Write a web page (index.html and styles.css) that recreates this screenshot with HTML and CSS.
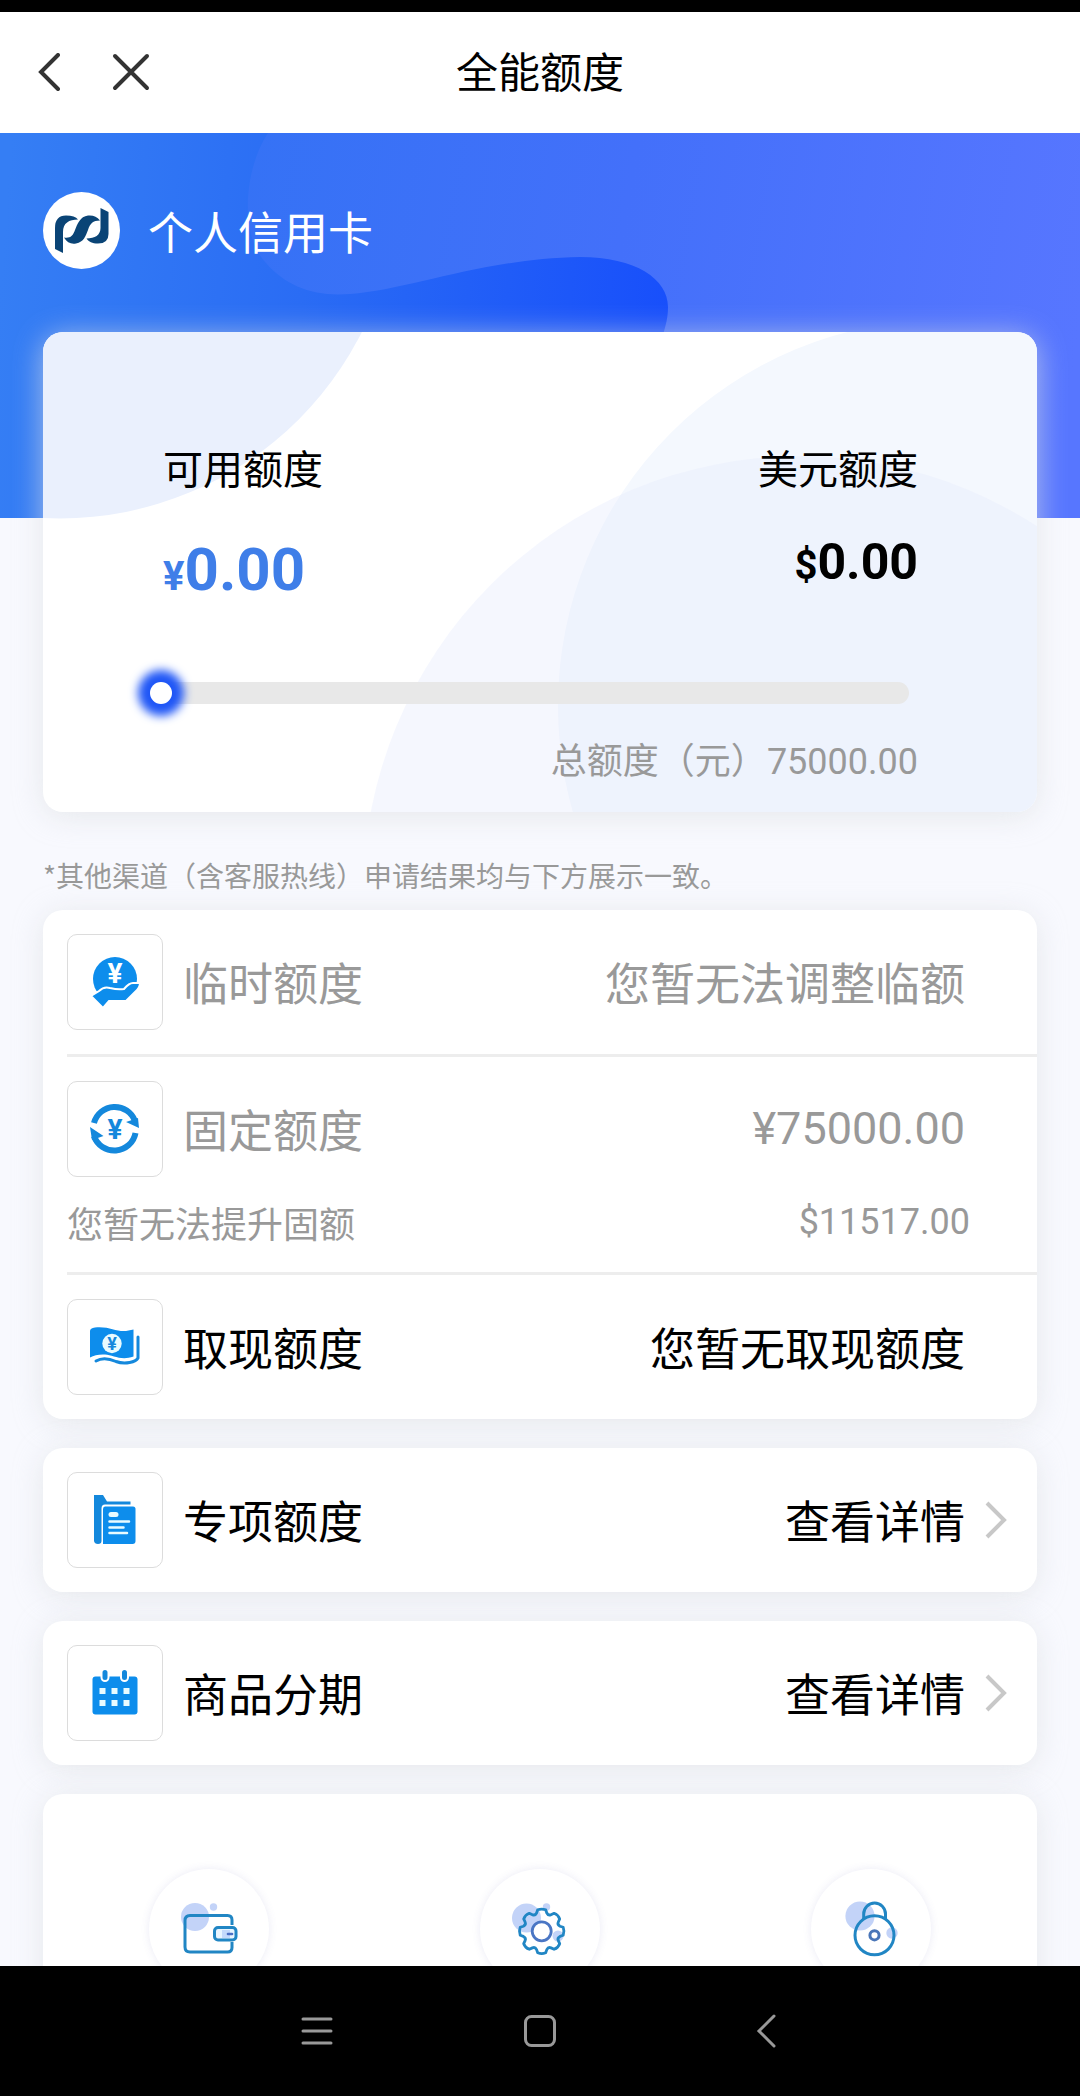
FILE: index.html
```html
<!DOCTYPE html>
<html lang="zh-CN">
<head>
<meta charset="utf-8">
<meta name="viewport" content="width=device-width, initial-scale=1">
<title>全能额度</title>
<link rel="stylesheet" href="styles.css">
</head>
<body>
<div class="status-bar"></div>

<header class="header">
  <div class="header-actions">
    <button class="icon-button" type="button" aria-label="返回">
      <svg width="22" height="40" viewBox="0 0 22 40"><path class="header-line" d="M20 2 3 19l17 17"/></svg>
    </button>
    <button class="icon-button" type="button" aria-label="关闭">
      <svg width="38" height="40" viewBox="0 0 38 40"><path class="header-line" d="m3 3 32 32M35 3 3 35"/></svg>
    </button>
  </div>
  <h1 class="title">全能额度</h1>
</header>

<main class="content">
  <section class="hero">
    <svg class="backdrop" viewBox="0 0 1080 385" preserveAspectRatio="none" aria-hidden="true">
      <defs>
        <linearGradient id="sky" gradientUnits="userSpaceOnUse" x1="0" y1="150" x2="670" y2="200">
          <stop offset="0" stop-color="#357ef4"/><stop offset=".45" stop-color="#2a6cf4"/><stop offset="1" stop-color="#184ffb"/>
        </linearGradient>
        <linearGradient id="wave" gradientUnits="userSpaceOnUse" x1="240" y1="60" x2="1080" y2="200">
          <stop offset="0" stop-color="#3572f5"/><stop offset=".45" stop-color="#4370fa"/><stop offset="1" stop-color="#5776ff"/>
        </linearGradient>
      </defs>
      <path fill="url(#sky)" d="M0 0h1080v385H0z"/>
      <path fill="url(#wave)" d="M268 0C243 38 240 104 266 130C286 153 314 164 350 161C410 157 480 126 580 124C636 124 668 146 668 174C668 184 666 192 662 205V385H1080V0Z"/>
    </svg>
    <div class="brand">
      <svg class="brand-logo" viewBox="0 0 77 77" aria-hidden="true">
        <circle cx="38.500" cy="38.500" r="38.500" fill="#fff"/>
        <g fill="#0a4476">
          <path d="M12 57V36Q12 23.500 23 23.500C29 23.500 33 25 35 27.500C26 27.500 20 31 20 40V61Z"/>
          <path d="M57 28.500C54 24.500 50 23 45 23.500C37 24.500 34.500 32 32 38C30 44 27 46.500 21 45.500C24 50.500 28 52.500 33 51.500C41 50 42.500 44 45 38C47 31.500 50 28.500 57 28.500Z"/>
          <path d="M57.500 16 65.500 20V42Q65.500 51.500 55 51.500C49 51.500 46 50 43.500 46.500C52 46.500 57.500 43 57.500 36Z"/>
        </g>
      </svg>
      <span class="brand-name">个人信用卡</span>
    </div>
  </section>

  <section class="card summary">
    <svg class="backdrop" viewBox="0 0 994 479" preserveAspectRatio="none" aria-hidden="true">
      <circle cx="17" cy="-152" r="338" fill="#eaf0fd"/>
      <circle cx="900" cy="373" r="385" fill="#f4f8fe"/>
      <circle cx="757" cy="561" r="437" fill="#e6ecfc" fill-opacity=".4"/>
    </svg>
    <div class="figures">
      <div class="figure">
        <h2 class="figure-label">可用额度</h2>
        <p class="amount amount-main"><span class="currency">¥</span>0.00</p>
      </div>
      <div class="figure figure-end">
        <h2 class="figure-label">美元额度</h2>
        <p class="amount amount-usd"><span class="currency">$</span>0.00</p>
      </div>
    </div>
    <input class="slider" type="range" min="0" max="75000" value="0" aria-label="可用额度">
    <p class="total">总额度（元）<span class="number">75000.00</span></p>
  </section>

  <p class="note">*其他渠道（含客服热线）申请结果均与下方展示一致。</p>

  <div class="cards">
    <ul class="card list">
      <li class="item muted">
        <div class="row">
          <span class="tile">
            <svg width="56" height="56" viewBox="0 0 56 56" aria-hidden="true">
              <circle cx="28" cy="25" r="22" fill="#0d8dec"/>
              <path d="M4 42 12 37Q17 32 23 34Q31 36 37 35Q42 29 46 29H53Q53 34 48 38L39 47H22L16 54Z" fill="#0d8dec" stroke="#fff" stroke-width="2"/>
              <text class="yen yen-light" x="28" y="29">¥</text>
            </svg>
          </span>
          <span class="label">临时额度</span>
          <span class="value">您暂无法调整临额</span>
        </div>
      </li>
      <li class="item muted">
        <div class="row">
          <span class="tile">
            <svg width="56" height="56" viewBox="0 0 56 56" aria-hidden="true">
              <g fill="none" stroke="#1488dc" stroke-width="6"><path d="M7 22A21.500 21.500 0 0 1 48 20"/><path d="M48.500 32A21.500 21.500 0 0 1 7 35"/></g>
              <path fill="#1488dc" d="M39 21 52 27 51 17ZM16.500 35 3 26 5 39Z"/>
              <text class="yen" x="28" y="38">¥</text>
            </svg>
          </span>
          <span class="label">固定额度</span>
          <span class="value number">¥75000.00</span>
        </div>
        <div class="subrow">
          <span>您暂无法提升固额</span>
          <span class="number">$11517.00</span>
        </div>
      </li>
      <li class="item">
        <div class="row">
          <span class="tile">
            <svg width="56" height="56" viewBox="0 0 56 56" aria-hidden="true">
              <path fill="#0d8dec" d="M3 12Q3 9 8 8.500C22 7 29 13 39 12L46.500 10.500V37.500C34 42 26 36 18 35.500Q9 35 3 38.500Z"/>
              <path fill="none" stroke="#1488dc" stroke-width="3" stroke-linecap="round" d="M51 18V39C49 43 38 46 29 42.500C20 38.500 14 39 9 42"/>
              <circle cx="25" cy="24.500" r="9.700" fill="#e9fbff"/>
              <text class="yen yen-small" x="25" y="31">¥</text>
            </svg>
          </span>
          <span class="label">取现额度</span>
          <span class="value">您暂无取现额度</span>
        </div>
      </li>
    </ul>

    <a class="card row" href="#special">
      <span class="tile">
        <svg width="56" height="56" viewBox="0 0 56 56" aria-hidden="true">
          <path fill="#1488dc" d="M7 3h9l4 6.500h23.500v3H18q-3.500 0-3.500 4V49q0 3-3.500 3t-4-3Z"/>
          <path fill="#0d8dec" d="M18 14.500h28q2.500 0 2.500 2.500v32q0 3-3 3H16V17q0-2.500 2-2.500Z"/>
          <g fill="none" stroke="#e9fbff" stroke-linecap="round"><path stroke-width="5" d="M24 22.500h5"/><path stroke-width="2.500" d="M22.500 29.500h19.500M22.500 35.500h14M22.500 41h17.500"/></g>
        </svg>
      </span>
      <span class="label">专项额度</span>
      <span class="value">查看详情</span>
      <svg class="chevron" width="22" height="40" viewBox="0 0 22 40" aria-hidden="true"><path d="m2 3 17 17L2 37"/></svg>
    </a>

    <a class="card row" href="#installment">
      <span class="tile">
        <svg width="56" height="56" viewBox="0 0 56 56" aria-hidden="true">
          <rect x="5.500" y="11.500" width="45" height="38" rx="3" fill="#0d8dec"/>
          <g fill="#1488dc" stroke="#fff" stroke-width="2"><rect x="14.500" y="4" width="7" height="12" rx="3.500"/><rect x="34" y="4" width="7" height="12" rx="3.500"/></g>
          <path fill="#e9fbff" d="M12.500 23h6v6h-6zM24.500 23h6v6h-6zM36.500 23h6v6h-6zM12.500 35h6v6h-6zM24.500 35h6v6h-6zM36.500 35h6v6h-6z"/>
        </svg>
      </span>
      <span class="label">商品分期</span>
      <span class="value">查看详情</span>
      <svg class="chevron" width="22" height="40" viewBox="0 0 22 40" aria-hidden="true"><path d="m2 3 17 17L2 37"/></svg>
    </a>

    <nav class="card shortcuts" aria-label="快捷功能">
      <a class="shortcut" href="#wallet" aria-label="钱包">
        <svg width="60" height="60" viewBox="0 0 60 60">
          <g fill="#c3d3f8"><circle cx="16" cy="18" r="14"/><circle cx="34.500" cy="8" r="3.700"/></g>
          <g fill="none" stroke="#2186c4" stroke-width="3">
            <path d="M53 26V21Q53 16.500 48.500 16.500H11Q6 16.500 6 21.500V48Q6 53 11 53H48.500Q53 53 53 48.500V43"/>
            <rect x="35.500" y="28.500" width="21.500" height="12.500" rx="3.500" fill="#e8f5ff"/>
          </g>
          <path d="M43 31h8v8h-8z" fill="#c3d9fb"/>
          <path d="M49 35h4" stroke="#4a6fc4" stroke-width="2.600" stroke-linecap="round"/>
        </svg>
      </a>
      <a class="shortcut" href="#settings" aria-label="设置">
        <svg width="60" height="60" viewBox="0 0 60 60">
          <g fill="#c3d3f8"><circle cx="16.500" cy="19" r="14.500"/><circle cx="36.500" cy="8" r="3.700"/><circle cx="48" cy="37" r="5.500"/></g>
          <g transform="translate(31.700 32.300)" fill="none" stroke-width="2.800">
            <path stroke="#2186c4" stroke-linejoin="round" d="M21.500-4Q23 0 21.500 4L18.300 5.100Q15.400 6.600 16.600 9.300L18 12.400Q16.500 16.500 12.400 18L9.300 16.600Q6.600 15.400 5.100 18.300L4 21.500Q0 23-4 21.500L-5.100 18.300Q-6.600 15.400-9.300 16.600L-12.400 18Q-16.500 16.500-18 12.400L-16.600 9.300Q-15.400 6.600-18.300 5.100L-21.500 4Q-23 0-21.500-4L-18.300-5.100Q-15.400-6.600-16.600-9.300L-18-12.400Q-16.500-16.500-12.400-18L-9.300-16.600Q-6.600-15.400-5.100-18.300L-4-21.500Q0-23 4-21.500L5.100-18.300Q6.600-15.400 9.300-16.600L12.400-18Q16.500-16.500 18-12.400L16.600-9.300Q15.400-6.600 18.300-5.100Z"/>
            <circle r="9.500" fill="#fff" stroke="#4a76c4"/>
          </g>
        </svg>
      </a>
      <a class="shortcut" href="#security" aria-label="安全">
        <svg width="60" height="60" viewBox="0 0 60 60">
          <g fill="#c3d3f8"><circle cx="19" cy="17" r="14.600"/><circle cx="51" cy="34" r="5.700"/></g>
          <g fill="none" stroke="#2186c4" stroke-width="3">
            <circle cx="33.500" cy="36.300" r="19.500"/>
            <path d="M22.700 20V15A10.900 10.900 0 0 1 44.500 15V20"/>
            <circle cx="33.500" cy="36.300" r="4.600" stroke="#4a76b8"/>
          </g>
        </svg>
      </a>
    </nav>
  </div>
</main>

<nav class="system-bar" aria-label="系统导航">
  <button class="icon-button" type="button" aria-label="最近任务">
    <svg width="34" height="34" viewBox="0 0 34 34"><path d="M4 5h28M4 17h28M4 29h28"/></svg>
  </button>
  <button class="icon-button" type="button" aria-label="主屏幕">
    <svg width="34" height="34" viewBox="0 0 34 34"><rect x="2.500" y="2.500" width="29" height="29" rx="6"/></svg>
  </button>
  <button class="icon-button" type="button" aria-label="返回上一页">
    <svg width="34" height="34" viewBox="0 0 34 34"><path d="M27 2 12 17l15 15"/></svg>
  </button>
</nav>
</body>
</html>
```
FILE: styles.css
```css
:root {
  --gutter: 43px;
  --text: #000;
  --muted: #999;
  --accent: #3f7ee8;
}

* {
  box-sizing: border-box;
}

body {
  display: flex;
  flex-direction: column;
  height: 100vh;
  margin: 0;
  background: #f8f9fe;
  color: var(--text);
  font-family: "Noto Sans CJK SC", "Noto Sans", sans-serif;
}

h1, h2, p, ul {
  margin: 0;
  padding: 0;
  font-weight: 400;
}

svg {
  display: block;
}

a {
  color: inherit;
  text-decoration: none;
}

.number {
  font-family: Roboto, "Noto Sans CJK SC", sans-serif;
}

.icon-button {
  padding: 0;
  border: 0;
  background: none;
}

.status-bar {
  flex: none;
  height: 12px;
  background: #000;
}

/* Title bar */
.header {
  display: grid;
  grid-template-columns: 1fr auto 1fr;
  align-items: center;
  flex: none;
  height: 121px;
  padding: 0 38px;
  background: #fff;
}

.header-actions {
  display: flex;
  gap: 52px;
}

.header-line {
  fill: none;
  stroke: #333;
  stroke-width: 4;
  stroke-linecap: round;
}

.title {
  padding-bottom: 6px;
  font-size: 42px;
  line-height: 60px;
}

.content {
  flex: 1;
  min-height: 0;
  overflow: hidden;
}

.backdrop {
  position: absolute;
  inset: 0;
  z-index: -1;
  width: 100%;
  height: 100%;
}

/* Blue banner behind the summary card */
.hero {
  position: relative;
  isolation: isolate;
  padding: 59px var(--gutter) 249px;
}

.brand {
  display: flex;
  align-items: center;
  gap: 28px;
}

.brand-logo {
  width: 77px;
  height: 77px;
}

.brand-name {
  color: #fff;
  font-size: 45px;
  line-height: 64px;
}

.card {
  border-radius: 20px;
  background: #fff;
  box-shadow: 0 4px 30px rgba(222, 225, 228, .7);
}

/* Summary card */
.summary {
  position: relative;
  isolation: isolate;
  margin: -186px var(--gutter) 0;
  padding: 106px 119px 24px 107px;
}

.summary .backdrop {
  border-radius: 20px;
}

.figures {
  display: flex;
  justify-content: space-between;
  align-items: flex-start;
  padding-left: 13px;
}

.figure-end {
  text-align: right;
}

.figure-label {
  margin-bottom: 37px;
  font-size: 40px;
  line-height: 58px;
}

.amount {
  font-family: Roboto, sans-serif;
  font-weight: 700;
}

.amount-main {
  color: var(--accent);
  font-size: 60px;
  line-height: 74px;
}

.amount-usd {
  font-size: 50px;
  line-height: 58px;
}

.currency {
  font-size: 40px;
  line-height: 40px;
}

.slider {
  display: block;
  width: calc(100% - 9px);
  height: 22px;
  margin: 75px 0 0;
  border-radius: 11px;
  background: #e8e8e8;
  appearance: none;
}

.slider::-webkit-slider-thumb {
  width: 22px;
  height: 22px;
  border-radius: 50%;
  background: #fff;
  box-shadow: 0 0 10px 12px #1f56f6;
  appearance: none;
}

.total {
  margin-top: 28px;
  color: var(--muted);
  font-size: 36px;
  line-height: 52px;
  text-align: right;
}

.note {
  margin: 43px var(--gutter) 15px;
  color: var(--muted);
  font-size: 28px;
  line-height: 40px;
}

/* Stacked cards */
.cards {
  display: flex;
  flex-direction: column;
  gap: 29px;
  padding: 0 var(--gutter);
}

.list {
  padding-left: 24px;
  list-style: none;
}

.item + .item {
  border-top: 3px solid #ededed;
}

.row {
  display: flex;
  align-items: center;
  padding: 24px 72px 24px 0;
  font-size: 45px;
  line-height: 64px;
}

.card.row {
  padding: 24px 30px 24px 24px;
}

.tile {
  display: grid;
  place-items: center;
  flex: none;
  width: 96px;
  height: 96px;
  margin-right: 20px;
  border: 1px solid #dcdcdc;
  border-radius: 10px;
}

.value {
  margin-left: auto;
}

.muted {
  color: var(--muted);
}

.subrow {
  display: flex;
  justify-content: space-between;
  padding: 0 67px 29px 0;
  font-size: 36px;
  line-height: 42px;
}

.chevron {
  margin-left: 20px;
  fill: none;
  stroke: #c8c8c8;
  stroke-width: 4;
}

.yen {
  fill: #1488dc;
  font-family: Roboto, sans-serif;
  font-size: 28px;
  font-weight: 700;
  text-anchor: middle;
}

.yen-light {
  fill: #fff;
}

.yen-small {
  font-size: 18px;
}

.shortcuts {
  display: grid;
  grid-template-columns: repeat(3, 1fr);
  justify-items: center;
  padding: 75px 0;
}

.shortcut {
  display: grid;
  place-items: center;
  width: 120px;
  height: 120px;
  border-radius: 50%;
  box-shadow: 0 0 8px rgba(90, 90, 170, .12);
}

/* Device navigation */
.system-bar {
  display: flex;
  justify-content: center;
  align-items: center;
  gap: 190px;
  flex: none;
  height: 130px;
  background: #000;
}

.system-bar svg {
  fill: none;
  stroke: #999;
  stroke-width: 3;
  stroke-linecap: round;
}
```
